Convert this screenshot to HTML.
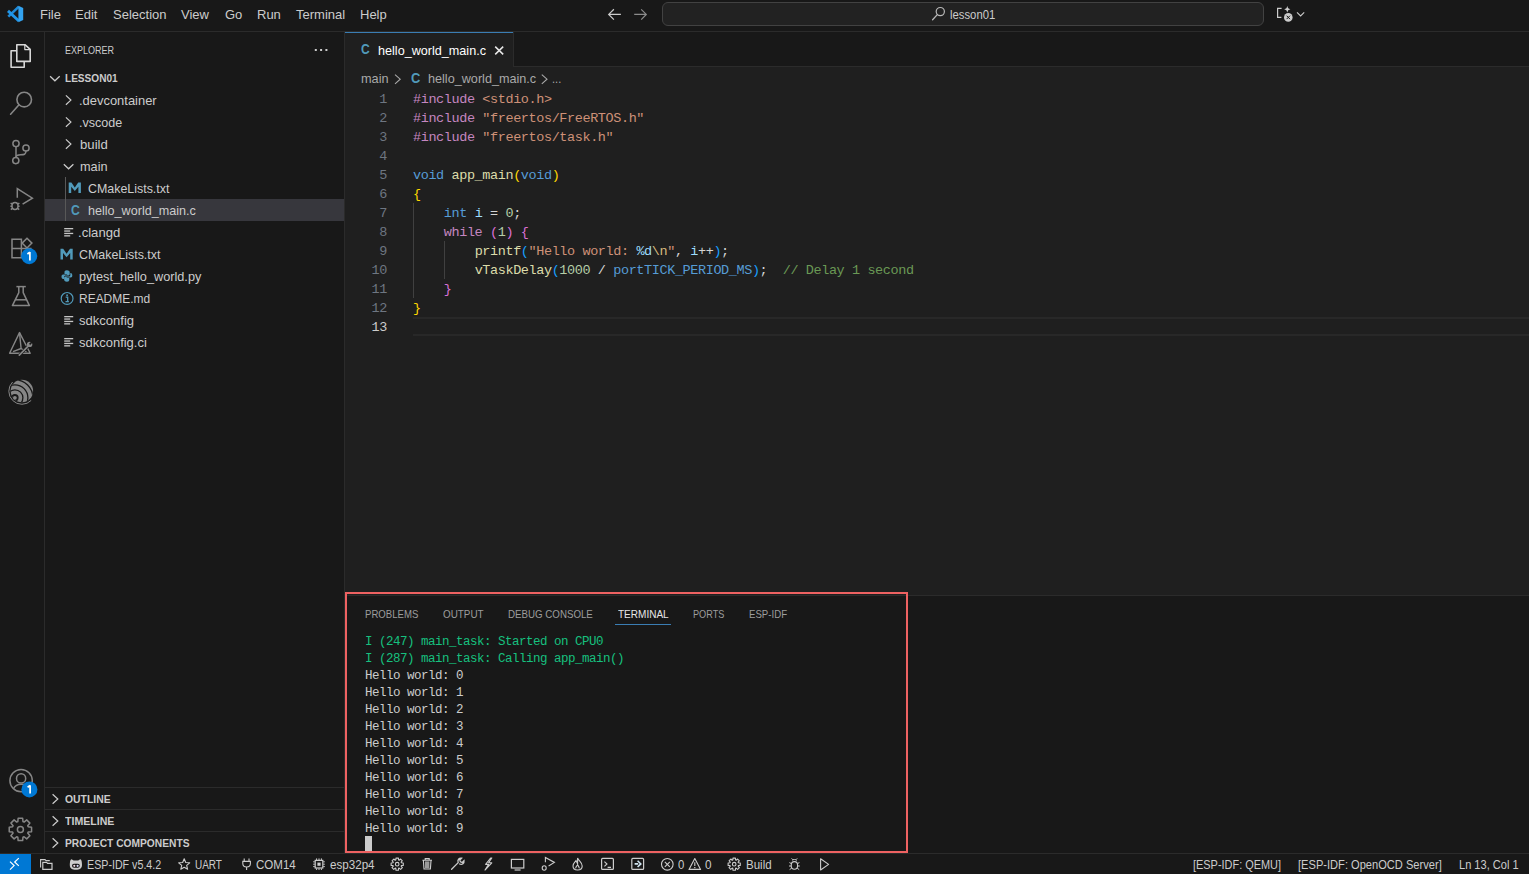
<!DOCTYPE html>
<html><head><meta charset="utf-8"><title>VS Code</title>
<style>
*{margin:0;padding:0;box-sizing:border-box}
html,body{width:1529px;height:874px;overflow:hidden;background:#181818;font-family:"Liberation Sans",sans-serif;color:#cccccc}
.a{position:absolute;white-space:pre;transform-origin:0 0;line-height:normal}
.bx{position:absolute}
svg{position:absolute;overflow:visible}
.menu{font-size:13px;color:#cccccc}
.tr{font-size:13px;color:#cccccc}
.sec{font-size:11px;font-weight:bold;color:#cccccc}
.cl{left:413px;font-family:"Liberation Mono",monospace;font-size:13.5px;letter-spacing:-0.4px;line-height:19px;height:19px;color:#d4d4d4}
.ln{position:absolute;left:345px;width:42px;text-align:right;font-family:"Liberation Mono",monospace;font-size:13.5px;letter-spacing:-0.4px;line-height:19px;color:#6e7681}
.tl{left:365px;font-family:"Liberation Mono",monospace;font-size:12.5px;letter-spacing:-0.5px;line-height:17px;color:#cccccc}
.pt{font-size:11px;color:#9d9d9d}
.sb{font-size:12px;color:#cccccc}
.k{color:#569cd6}.pp{color:#c586c0}.s{color:#ce9178}.f{color:#dcdcaa}.v{color:#9cdcfe}.n{color:#b5cea8}.c{color:#6a9955}.e{color:#d7ba7d}
.b1{color:#ffd700}.b2{color:#da70d6}.b3{color:#179fff}
.g{color:#16c07f}
</style></head><body>
<div class="bx" style="left:0px;top:0px;width:1529px;height:31px;background:#181818;"></div><div class="bx" style="left:0px;top:31px;width:1529px;height:1px;background:#2b2b2b;"></div><div class="bx" style="left:44px;top:32px;width:1px;height:821px;background:#2b2b2b;"></div><div class="bx" style="left:344px;top:32px;width:1px;height:821px;background:#2b2b2b;"></div><div class="bx" style="left:345px;top:32px;width:1184px;height:563px;background:#1f1f1f;"></div><div class="bx" style="left:345px;top:32px;width:1184px;height:34px;background:#181818;"></div><div class="bx" style="left:345px;top:66px;width:1184px;height:1px;background:#2b2b2b;"></div><div class="bx" style="left:345px;top:32px;width:168px;height:35px;background:#1f1f1f;"></div><div class="bx" style="left:345px;top:32px;width:168px;height:1px;background:#3a7db3;"></div><div class="bx" style="left:513px;top:32px;width:1px;height:34px;background:#2b2b2b;"></div><div class="bx" style="left:345px;top:595px;width:1184px;height:1px;background:#2b2b2b;"></div><div class="bx" style="left:0px;top:853px;width:1529px;height:1px;background:#2b2b2b;"></div><div class="bx" style="left:0px;top:854px;width:31px;height:20px;background:#0078d4;"></div><div class="bx" style="left:662px;top:2px;width:602px;height:24px;background:#222222;border:1px solid #424242;border-radius:6px"></div><div class="bx" style="left:45px;top:199px;width:299px;height:22px;background:#37373d;"></div><div class="bx" style="left:45px;top:787px;width:299px;height:1px;background:#2b2b2b;"></div><div class="bx" style="left:45px;top:809px;width:299px;height:1px;background:#2b2b2b;"></div><div class="bx" style="left:45px;top:831px;width:299px;height:1px;background:#2b2b2b;"></div><div class="bx" style="left:413px;top:317px;width:1116px;height:2px;background:#282828;"></div><div class="bx" style="left:413px;top:334px;width:1116px;height:2px;background:#282828;"></div><div class="bx" style="left:413px;top:203px;width:1px;height:95px;background:#404040;"></div><div class="bx" style="left:444px;top:241px;width:1px;height:38px;background:#404040;"></div><div class="bx" style="left:65px;top:177px;width:1px;height:44px;background:#585858;"></div><div class="bx" style="left:615px;top:624px;width:56px;height:1px;background:#3a7db3;"></div><div class="bx" style="left:365px;top:836px;width:7px;height:15px;background:#cccccc;"></div>
<svg style="left:0px;top:0px" width="32" height="31" viewBox="0 0 32 31">
<g fill="none" stroke-linecap="butt">
<path d="M18.8 6.6 L8.3 16.6" stroke="#1f8ad8" stroke-width="2.6"/>
<path d="M8.0 10.9 L18.9 21.0" stroke="#2196e8" stroke-width="2.9"/>
</g>
<polygon points="18.4,5.8 23.2,8.1 23.2,19.9 18.4,22.2" fill="#33a3f0"/>
</svg>
<svg style="left:0px;top:32px" width="45" height="45" viewBox="0 0 45 45">
<g fill="none" stroke="#d7d7d7" stroke-width="1.6" stroke-linejoin="round">
<path d="M16.8 12.8 H25.2 L30.2 17.4 V29.4 H16.8 Z"/>
<path d="M24.8 12.8 V17.6 H30.2" stroke-width="1.2"/>
<path d="M16.6 18.8 H11.1 V35.2 H24.2 V29.6"/>
</g></svg><svg style="left:0px;top:77px" width="45" height="48" viewBox="0 0 45 48">
<g fill="none" stroke="#868686" stroke-width="1.6">
<circle cx="24.2" cy="22.6" r="7.3"/>
<path d="M19.0 27.8 L10.6 37.2" stroke-linecap="round"/>
</g></svg><svg style="left:0px;top:125px" width="45" height="48" viewBox="0 0 45 48">
<g fill="none" stroke="#868686" stroke-width="1.5">
<circle cx="16" cy="18.6" r="3.1"/>
<circle cx="26" cy="23.0" r="3.1"/>
<circle cx="15.8" cy="35.6" r="3.1"/>
<path d="M16 21.7 V32.5"/>
<path d="M26 26.1 C26 29.5 24 29.8 20.5 29.8 C18 29.8 16.2 30.5 16 32.4"/>
</g></svg><svg style="left:0px;top:173px" width="45" height="48" viewBox="0 0 45 48">
<g fill="none" stroke="#868686" stroke-width="1.5" stroke-linejoin="miter">
<path d="M17.3 24.8 V15.6 L32.4 25.2 L22.6 31.2"/>
<ellipse cx="15.0" cy="33.0" rx="3.0" ry="3.5"/>
<path d="M10.6 30.0 L12.2 31.2 M10.4 33.2 H12 M10.8 36.6 L12.4 35.2 M19.4 30.0 L17.8 31.2 M19.6 33.2 H18 M19.2 36.6 L17.6 35.2"/>
</g></svg><svg style="left:0px;top:221px" width="45" height="48" viewBox="0 0 45 48">
<g fill="none" stroke="#868686" stroke-width="1.5">
<path d="M12 18.2 H21.4 V36.8 H12 Z M12 27.6 H30.8 V36.8 H21.4"/>
<path d="M27.0 17.2 L31.9 22.1 L27.0 27.0 L22.1 22.1 Z"/>
</g>
<circle cx="29.2" cy="35.2" r="8" fill="#0078d4"/>
<path d="M29.9 31.0 V39.4 M29.9 31.2 L27.4 33.0" fill="none" stroke="#ffffff" stroke-width="1.7"/></svg><svg style="left:0px;top:269px" width="45" height="48" viewBox="0 0 45 48">
<g fill="none" stroke="#868686" stroke-width="1.5" stroke-linejoin="round">
<path d="M16.4 17.6 H25.8"/>
<path d="M18.8 17.6 V23.6 L12.4 36.6 H29.4 L23.2 23.6 V17.6"/>
<path d="M15.2 30.8 H26.6"/>
</g></svg><svg style="left:0px;top:317px" width="45" height="48" viewBox="0 0 45 48">
<g fill="none" stroke="#868686" stroke-width="1.4" stroke-linejoin="round">
<path d="M19.5 15.6 L9.6 36.2 H30.2 Z"/>
<path d="M19.5 15.6 L21.1 31.5 L13 34.6 M21.1 31.5 L26.5 35"/>
</g>
<path d="M19.3 38.2 L28.4 28.8" stroke="#181818" stroke-width="3"/>
<path d="M19.3 38.2 L28.4 28.8" stroke="#868686" stroke-width="1.7" stroke-linecap="round"/>
<circle cx="29.6" cy="27.4" r="2.7" fill="#868686"/>
<path d="M29.6 27.4 L32.6 24.4" stroke="#181818" stroke-width="1.5"/>
</svg><svg style="left:0px;top:365px" width="45" height="48" viewBox="0 0 45 48">
<defs><clipPath id="espc"><circle cx="21.9" cy="26.0" r="11.2"/></clipPath></defs>
<g clip-path="url(#espc)">
<rect x="0" y="0" width="45" height="48" fill="#868686"/>
<g fill="none" stroke="#181818" stroke-width="1.3">
<circle cx="14.9" cy="32.8" r="8"/>
<circle cx="14.9" cy="32.8" r="13"/>
<circle cx="14.9" cy="32.8" r="18"/>
</g>
<circle cx="14.9" cy="32.8" r="3.7" fill="#181818"/>
<path d="M14.9 32.8 L30 48 L0 48 L0 30 Z" fill="#181818" opacity="0"/>
</g>
<circle cx="14.9" cy="32.8" r="1.9" fill="#868686"/>
<path d="M12.6 17.0 A12.3 12.3 0 0 0 31.2 35.4" fill="none" stroke="#868686" stroke-width="1"/>
</svg><svg style="left:0px;top:757px" width="45" height="48" viewBox="0 0 45 48">
<g fill="none" stroke="#868686" stroke-width="1.5">
<circle cx="21.1" cy="23.6" r="11.2"/>
<circle cx="21.1" cy="21.4" r="4.6"/>
<path d="M13.4 31.8 C15 28.6 17.8 27.2 21.1 27.2 C24.4 27.2 27.2 28.6 28.8 31.8"/>
</g>
<circle cx="29.4" cy="32.4" r="8" fill="#0078d4"/>
<path d="M30.1 28.2 V36.6 M30.1 28.4 L27.6 30.2" fill="none" stroke="#ffffff" stroke-width="1.7"/></svg><svg style="left:7.20px;top:815.60px" width="26.80" height="26.80" viewBox="7.20 815.60 26.80 26.80"><polygon points="31.77,826.74 31.77,831.26 28.38,831.58 27.93,832.68 30.10,835.30 26.90,838.50 24.28,836.33 23.18,836.78 22.86,840.17 18.34,840.17 18.02,836.78 16.92,836.33 14.30,838.50 11.10,835.30 13.27,832.68 12.82,831.58 9.43,831.26 9.43,826.74 12.82,826.42 13.27,825.32 11.10,822.70 14.30,819.50 16.92,821.67 18.02,821.22 18.34,817.83 22.86,817.83 23.18,821.22 24.28,821.67 26.90,819.50 30.10,822.70 27.93,825.32 28.38,826.42" fill="none" stroke="#868686" stroke-width="1.5" stroke-linejoin="round"/><circle cx="20.6" cy="829" r="3.0" fill="none" stroke="#868686" stroke-width="1.5"/></svg>
<svg style="left:0;top:0" width="1529" height="874" viewBox="0 0 1529 874"><path d="M50.1 76.2 L54.90 80.80 L59.70 76.2" fill="none" stroke="#cccccc" stroke-width="1.2"/><path d="M65.9 95.4 L70.90 100.10 L65.9 104.80" fill="none" stroke="#cccccc" stroke-width="1.2"/><path d="M65.9 117.4 L70.90 122.10 L65.9 126.80" fill="none" stroke="#cccccc" stroke-width="1.2"/><path d="M65.9 139.4 L70.90 144.10 L65.9 148.80" fill="none" stroke="#cccccc" stroke-width="1.2"/><path d="M63.8 164.2 L68.60 168.80 L73.40 164.2" fill="none" stroke="#cccccc" stroke-width="1.2"/><polygon points="68.70,193.00 68.70,182.40 71.40,182.40 74.80,187.38 78.20,182.40 80.90,182.40 80.90,193.00 78.40,193.00 78.40,186.64 74.80,190.88 71.20,186.64 71.20,193.00" fill="#519aba"/><rect x="64.2" y="228.00" width="9.0" height="1.3" fill="#c5c5c5"/><rect x="64.2" y="230.40" width="6.0" height="1.3" fill="#c5c5c5"/><rect x="64.2" y="232.80" width="9.0" height="1.3" fill="#c5c5c5"/><rect x="64.2" y="235.20" width="6.0" height="1.3" fill="#c5c5c5"/><polygon points="60.50,259.40 60.50,248.80 63.20,248.80 66.60,253.78 70.00,248.80 72.70,248.80 72.70,259.40 70.20,259.40 70.20,253.04 66.60,257.28 63.00,253.04 63.00,259.40" fill="#519aba"/><g fill="#519aba">
<path d="M66.9 270.3 C64.7 270.3 64.5 271.3 64.5 272.5 V273.90000000000003 H67.1 V274.5 H63.1 C61.9 274.5 61.5 275.5 61.5 276.5 C61.5 277.90000000000003 62.0 278.90000000000003 63.1 278.90000000000003 H64.1 V277.1 C64.1 276.1 64.9 275.5 65.9 275.5 H68.5 C69.3 275.5 69.7 274.90000000000003 69.7 274.1 V272.5 C69.7 271.3 68.9 270.3 66.9 270.3 Z"/>
<path d="M66.9 281.7 C69.1 281.7 69.3 280.7 69.3 279.5 V278.1 H66.7 V277.5 H70.7 C71.9 277.5 72.3 276.5 72.3 275.5 C72.3 274.1 71.8 273.1 70.7 273.1 H70.3 V274.90000000000003 C70.3 275.90000000000003 69.5 276.5 68.5 276.5 H65.7 C64.7 276.5 64.1 277.1 64.1 277.90000000000003 V279.5 C64.1 280.7 64.9 281.7 66.9 281.7 Z"/>
</g><circle cx="67.1" cy="298.4" r="5.9" fill="none" stroke="#519aba" stroke-width="1.2"/>
<circle cx="67.1" cy="295.20" r="0.9" fill="#519aba"/>
<path d="M65.70 297.20 H67.70 V301.40 M65.50 301.60 H68.90" fill="none" stroke="#519aba" stroke-width="1.3"/><rect x="64.2" y="316.00" width="9.0" height="1.3" fill="#c5c5c5"/><rect x="64.2" y="318.40" width="6.0" height="1.3" fill="#c5c5c5"/><rect x="64.2" y="320.80" width="9.0" height="1.3" fill="#c5c5c5"/><rect x="64.2" y="323.20" width="6.0" height="1.3" fill="#c5c5c5"/><rect x="64.2" y="338.00" width="9.0" height="1.3" fill="#c5c5c5"/><rect x="64.2" y="340.40" width="6.0" height="1.3" fill="#c5c5c5"/><rect x="64.2" y="342.80" width="9.0" height="1.3" fill="#c5c5c5"/><rect x="64.2" y="345.20" width="6.0" height="1.3" fill="#c5c5c5"/><path d="M52.6 794.2 L57.80 799.00 L52.6 803.80" fill="none" stroke="#cccccc" stroke-width="1.2"/><path d="M52.6 816.2 L57.80 821.00 L52.6 825.80" fill="none" stroke="#cccccc" stroke-width="1.2"/><path d="M52.6 838.2 L57.80 843.00 L52.6 847.80" fill="none" stroke="#cccccc" stroke-width="1.2"/><rect x="314.8" y="49" width="2" height="2" fill="#cccccc"/><rect x="320.1" y="49" width="2" height="2" fill="#cccccc"/><rect x="325.4" y="49" width="2" height="2" fill="#cccccc"/><path d="M613.9 9.3 L608.7 14.4 L613.9 19.6 M608.7 14.4 H620.9" fill="none" stroke="#cccccc" stroke-width="1.2"/><path d="M641.2 9.3 L646.3 14.4 L641.2 19.6 M646.3 14.4 H634.2" fill="none" stroke="#8b8b8b" stroke-width="1.2"/><circle cx="940.3" cy="11.6" r="4.1" fill="none" stroke="#b8b8b8" stroke-width="1.2"/><path d="M937.3 14.6 L932.6 19.8" stroke="#b8b8b8" stroke-width="1.3" stroke-linecap="round"/><path d="M1281.6 8.4 H1277.6 V17.4 H1281.4" fill="none" stroke="#cccccc" stroke-width="1.2"/><path d="M1287.3 5.8 Q1287.6 8.8 1290.4 9.3 Q1287.6 9.8 1287.3 12.6 Q1287 9.8 1284.2 9.3 Q1287 8.8 1287.3 5.8 Z" fill="#cccccc"/><circle cx="1288.3" cy="17.4" r="4.3" fill="#cccccc"/><path d="M1286.6 15.7 L1290 19.1 M1290 15.7 L1286.6 19.1" stroke="#181818" stroke-width="1"/><path d="M1297.0 12.4 L1300.60 15.90 L1304.20 12.4" fill="none" stroke="#cccccc" stroke-width="1.1"/><path d="M495.2 46.6 L503.2 54.4 M503.2 46.6 L495.2 54.4" stroke="#e8e8e8" stroke-width="1.5"/><path d="M395.0 74.6 L400.20 79.20 L395.0 83.80" fill="none" stroke="#a9a9a9" stroke-width="1.1"/><path d="M541.8 74.6 L547.00 79.20 L541.8 83.80" fill="none" stroke="#a9a9a9" stroke-width="1.1"/><path d="M10 861.6 L14.1 865.6 L10 869.6 M18.8 858.1 L14.7 862 L18.8 865.9" fill="none" stroke="#ffffff" stroke-width="1.2"/><path d="M40.6 867.6 V859.6 H45 L46 860.6 H49.8" fill="none" stroke="#cccccc" stroke-width="1.1"/><path d="M42.8 869.4 V862.4 H46.6 L47.6 863.4 H52 V869.4 Z" fill="none" stroke="#cccccc" stroke-width="1.2"/><path d="M69.8 865 C69.8 862 70.2 859.4 71.6 859.2 L73.6 860.6 H78.2 L80.2 859.2 C81.6 859.4 82.0 862 82.0 865 C82.0 868.4 79.4 869.8 75.9 869.8 C72.4 869.8 69.8 868.4 69.8 865 Z" fill="#cccccc"/><rect x="72.0" y="863.8" width="7.8" height="4.0" rx="2" fill="#141414"/><circle cx="74.3" cy="865.8" r="1.1" fill="#f0d8e0"/><circle cx="77.6" cy="865.8" r="1.1" fill="#d8d8f8"/><polygon points="184.20,858.80 185.73,862.50 189.72,862.81 186.67,865.40 187.61,869.29 184.20,867.20 180.79,869.29 181.73,865.40 178.68,862.81 182.67,862.50" fill="none" stroke="#cccccc" stroke-width="1.1" stroke-linejoin="round"/><path d="M244.2 858.4 V861 M249 858.4 V861 M242.8 861.4 H250.4 V863.6 C250.4 865.8 248.6 867 246.6 867 C244.6 867 242.8 865.8 242.8 863.6 Z M246.6 867 V870" fill="none" stroke="#cccccc" stroke-width="1.1"/><rect x="315.2" y="860.4" width="7.6" height="7.6" fill="none" stroke="#cccccc" stroke-width="1.2"/><rect x="317.4" y="862.6" width="3.2" height="3.2" fill="#cccccc"/><path d="M316.6 858.4 V860 M319 858.4 V860 M321.4 858.4 V860 M316.6 868.4 V870 M319 868.4 V870 M321.4 868.4 V870 M313.2 861.8 H314.8 M313.2 864.2 H314.8 M313.2 866.6 H314.8 M323.2 861.8 H324.8 M323.2 864.2 H324.8 M323.2 866.6 H324.8" stroke="#cccccc" stroke-width="1"/><path d="M422.4 860.2 H432 M425.2 860.2 V858.6 H429.2 V860.2 M423.4 860.6 L424 869 H430.4 L431 860.6" fill="none" stroke="#cccccc" stroke-width="1.1"/><rect x="425" y="861.4" width="4.4" height="7" fill="#9a9a9a"/><path d="M451.6 869.2 L458.2 862.6 M458.2 862.6 C457.2 860 459 857.8 461.6 858.2 L459.8 860 L460.4 861.8 L462.2 862.4 L464 860.6 C464.4 863.2 462.2 865 459.6 864" fill="none" stroke="#cccccc" stroke-width="1.3" stroke-linecap="round"/><path d="M490.6 858 L485.6 864.4 H488.6 L485 870 L491.8 862.8 H488.6 L491.8 858 Z" fill="none" stroke="#cccccc" stroke-width="1.1" stroke-linejoin="round"/><rect x="511.4" y="859.4" width="12.4" height="8.6" fill="none" stroke="#cccccc" stroke-width="1.2"/><path d="M514.6 870 H520.6" stroke="#cccccc" stroke-width="1.2"/><path d="M545.4 862.2 V857.4 L554.4 862.4 L548.6 866" fill="none" stroke="#cccccc" stroke-width="1.1"/><ellipse cx="544.2" cy="868" rx="2" ry="2.2" fill="none" stroke="#cccccc" stroke-width="1.1"/><path d="M577.6 858 C578.4 860.6 582.2 862.4 582.2 866 C582.2 868.6 580 870 577.6 870 C575.2 870 573 868.6 573 866 C573 863.4 575 862 576 860.6 C576.8 862.2 577 863 577.6 863.8 Z M575.8 868.4 C575.4 866.8 577 866 577.6 864.8 C578.2 866 579.4 866.8 579.2 868.4" fill="none" stroke="#cccccc" stroke-width="1.1"/><rect x="601.6" y="858.4" width="11.8" height="11" rx="1" fill="none" stroke="#cccccc" stroke-width="1.2"/><path d="M604.4 861.6 L607 864 L604.4 866.4 M607.6 867.4 H611" fill="none" stroke="#cccccc" stroke-width="1.1"/><rect x="631.8" y="858.4" width="11.8" height="11" rx="1" fill="none" stroke="#cccccc" stroke-width="1.2"/><path d="M634.6 863.9 H638.2 M637.6 860.8 L640.8 863.9 L637.6 867" fill="none" stroke="#d0e4f0" stroke-width="1.6"/><circle cx="667.3" cy="864.3" r="5.8" fill="none" stroke="#cccccc" stroke-width="1.1"/><path d="M664.8 861.8 L669.8 866.8 M669.8 861.8 L664.8 866.8" stroke="#cccccc" stroke-width="1.1"/><path d="M694.8 858.6 L700.6 869.4 H689 Z" fill="none" stroke="#cccccc" stroke-width="1.1" stroke-linejoin="round"/><path d="M694.8 862.2 V866" stroke="#cccccc" stroke-width="1.1"/><rect x="694.2" y="867" width="1.2" height="1.2" fill="#cccccc"/><ellipse cx="794.4" cy="865.4" rx="3.2" ry="3.8" fill="none" stroke="#cccccc" stroke-width="1.1"/><path d="M792 860.4 C792.4 859.2 796.4 859.2 796.8 860.4 M789.4 862.6 L791.4 863.6 M799.4 862.6 L797.4 863.6 M789 866 H791.2 M799.8 866 H797.6 M789.6 869.6 L791.6 868.2 M799.2 869.6 L797.2 868.2 M791.6 858.4 L792.6 859.6 M797.2 858.4 L796.2 859.6" fill="none" stroke="#cccccc" stroke-width="1"/><path d="M820.6 858.8 L828.6 864.4 L820.6 870 Z" fill="none" stroke="#cccccc" stroke-width="1.1" stroke-linejoin="round"/></svg>
<svg style="left:389.20px;top:855.70px" width="16.40" height="16.40" viewBox="389.20 855.70 16.40 16.40"><polygon points="403.48,862.67 403.48,865.13 401.58,865.28 401.33,865.87 402.57,867.33 400.83,869.07 399.37,867.83 398.78,868.08 398.63,869.98 396.17,869.98 396.02,868.08 395.43,867.83 393.97,869.07 392.23,867.33 393.47,865.87 393.22,865.28 391.32,865.13 391.32,862.67 393.22,862.52 393.47,861.93 392.23,860.47 393.97,858.73 395.43,859.97 396.02,859.72 396.17,857.82 398.63,857.82 398.78,859.72 399.37,859.97 400.83,858.73 402.57,860.47 401.33,861.93 401.58,862.52" fill="none" stroke="#cccccc" stroke-width="1.1" stroke-linejoin="round"/><circle cx="397.4" cy="863.9" r="1.8" fill="none" stroke="#cccccc" stroke-width="1.1"/></svg>
<svg style="left:726.30px;top:856.10px" width="16.40" height="16.40" viewBox="726.30 856.10 16.40 16.40"><polygon points="740.58,863.07 740.58,865.53 738.68,865.68 738.43,866.27 739.67,867.73 737.93,869.47 736.47,868.23 735.88,868.48 735.73,870.38 733.27,870.38 733.12,868.48 732.53,868.23 731.07,869.47 729.33,867.73 730.57,866.27 730.32,865.68 728.42,865.53 728.42,863.07 730.32,862.92 730.57,862.33 729.33,860.87 731.07,859.13 732.53,860.37 733.12,860.12 733.27,858.22 735.73,858.22 735.88,860.12 736.47,860.37 737.93,859.13 739.67,860.87 738.43,862.33 738.68,862.92" fill="none" stroke="#cccccc" stroke-width="1.1" stroke-linejoin="round"/><circle cx="734.5" cy="864.3" r="1.8" fill="none" stroke="#cccccc" stroke-width="1.1"/></svg>
<span id="m_file" class="a menu" style="left:40.00px;top:7px;">File</span><span id="m_edit" class="a menu" style="left:75.00px;top:7px;">Edit</span><span id="m_sel" class="a menu" style="left:113.00px;top:7px;">Selection</span><span id="m_view" class="a menu" style="left:181.00px;top:7px;">View</span><span id="m_go" class="a menu" style="left:225.00px;top:7px;">Go</span><span id="m_run" class="a menu" style="left:257.00px;top:7px;">Run</span><span id="m_term" class="a menu" style="left:296.00px;top:7px;">Terminal</span><span id="m_help" class="a menu" style="left:360.00px;top:7px;">Help</span><span id="cc" class="a " style="left:950.41px;top:8px;transform:scaleX(0.9418);font-size:12px;color:#cccccc">lesson01</span><span id="explorer" class="a " style="left:64.90px;top:44px;transform:scaleX(0.8200);font-size:11px;color:#cccccc">EXPLORER</span><span id="lesson" class="a sec" style="left:64.89px;top:72px;transform:scaleX(0.9157);">LESSON01</span><span id="t_dev" class="a tr" style="left:78.61px;top:93px;transform:scaleX(0.9949);">.devcontainer</span><span id="t_vsc" class="a tr" style="left:78.63px;top:115px;transform:scaleX(0.9660);">.vscode</span><span id="t_build" class="a tr" style="left:79.50px;top:137px;transform:scaleX(1.0120);">build</span><span id="t_main" class="a tr" style="left:79.50px;top:159px;transform:scaleX(0.9788);">main</span><span id="t_cm1" class="a tr" style="left:87.60px;top:181px;transform:scaleX(0.9547);">CMakeLists.txt</span><span id="t_hw" class="a tr" style="left:87.50px;top:203px;transform:scaleX(0.9685);">hello_world_main.c</span><span id="t_clangd" class="a tr" style="left:77.70px;top:225px;transform:scaleX(1.0073);">.clangd</span><span id="t_cm2" class="a tr" style="left:78.70px;top:247px;transform:scaleX(0.9547);">CMakeLists.txt</span><span id="t_py" class="a tr" style="left:78.70px;top:269px;transform:scaleX(0.9785);">pytest_hello_world.py</span><span id="t_readme" class="a tr" style="left:78.70px;top:291px;transform:scaleX(0.9209);">README.md</span><span id="t_sdk" class="a tr" style="left:78.70px;top:313px;transform:scaleX(1.0037);">sdkconfig</span><span id="t_sdkci" class="a tr" style="left:78.70px;top:335px;transform:scaleX(0.9986);">sdkconfig.ci</span><span id="s_outline" class="a sec" style="left:64.70px;top:793px;transform:scaleX(0.9448);">OUTLINE</span><span id="s_timeline" class="a sec" style="left:64.90px;top:815px;transform:scaleX(0.9629);">TIMELINE</span><span id="s_proj" class="a sec" style="left:64.90px;top:837px;transform:scaleX(0.9299);">PROJECT COMPONENTS</span><span id="ic_tab" class="a " style="left:360.50px;top:41px;transform:scaleX(0.8600);font-size:14px;font-weight:bold;color:#519aba">C</span><span id="ic_tree" class="a " style="left:70.60px;top:202px;transform:scaleX(0.8700);font-size:14px;font-weight:bold;color:#519aba">C</span><span id="ic_bc" class="a " style="left:410.80px;top:70px;transform:scaleX(0.9200);font-size:14px;font-weight:bold;color:#519aba">C</span><span id="tab" class="a " style="left:377.50px;top:43px;transform:scaleX(0.9703);font-size:13px;color:#ffffff">hello_world_main.c</span><span id="bc_main" class="a " style="left:361.20px;top:71px;transform:scaleX(0.9788);font-size:13px;color:#a9a9a9">main</span><span id="bc_file" class="a " style="left:428.10px;top:71px;transform:scaleX(0.9721);font-size:13px;color:#a9a9a9">hello_world_main.c</span><span id="bc_dots" class="a " style="left:552.21px;top:71px;transform:scaleX(0.8509);font-size:13px;color:#a9a9a9">...</span><span id="p_prob" class="a pt" style="left:364.90px;top:608px;transform:scaleX(0.8722);">PROBLEMS</span><span id="p_out" class="a pt" style="left:442.80px;top:608px;transform:scaleX(0.8979);">OUTPUT</span><span id="p_dbg" class="a pt" style="left:508.00px;top:608px;transform:scaleX(0.8843);">DEBUG CONSOLE</span><span id="p_term" class="a pt" style="left:618.10px;top:608px;transform:scaleX(0.9107);color:#e7e7e7">TERMINAL</span><span id="p_ports" class="a pt" style="left:693.30px;top:608px;transform:scaleX(0.8317);">PORTS</span><span id="p_esp" class="a pt" style="left:748.50px;top:608px;transform:scaleX(0.8768);">ESP-IDF</span><span id="sb_idf" class="a sb" style="left:86.80px;top:858px;transform:scaleX(0.8904);">ESP-IDF v5.4.2</span><span id="sb_uart" class="a sb" style="left:194.90px;top:858px;transform:scaleX(0.8304);">UART</span><span id="sb_com" class="a sb" style="left:256.49px;top:858px;transform:scaleX(0.9622);">COM14</span><span id="sb_chip" class="a sb" style="left:329.90px;top:858px;transform:scaleX(0.9676);">esp32p4</span><span id="sb_e0" class="a sb" style="left:678.00px;top:858px;transform:scaleX(0.9457);">0</span><span id="sb_w0" class="a sb" style="left:705.05px;top:858px;transform:scaleX(0.9779);">0</span><span id="sb_build" class="a sb" style="left:746.10px;top:858px;transform:scaleX(0.9596);">Build</span><span id="sb_qemu" class="a sb" style="left:1192.80px;top:858px;transform:scaleX(0.9104);">[ESP-IDF: QEMU]</span><span id="sb_ocd" class="a sb" style="left:1297.80px;top:858px;transform:scaleX(0.9251);">[ESP-IDF: OpenOCD Server]</span><span id="sb_ln" class="a sb" style="left:1458.50px;top:858px;transform:scaleX(0.9216);">Ln 13, Col 1</span>
<div class="ln" style="top:90px">1</div><div class="ln" style="top:109px">2</div><div class="ln" style="top:128px">3</div><div class="ln" style="top:147px">4</div><div class="ln" style="top:166px">5</div><div class="ln" style="top:185px">6</div><div class="ln" style="top:204px">7</div><div class="ln" style="top:223px">8</div><div class="ln" style="top:242px">9</div><div class="ln" style="top:261px">10</div><div class="ln" style="top:280px">11</div><div class="ln" style="top:299px">12</div><div class="ln" style="top:318px;color:#cccccc">13</div><div class="a cl" style="top:90px"><span class="pp">#include</span> <span class="s">&lt;stdio.h&gt;</span></div><div class="a cl" style="top:109px"><span class="pp">#include</span> <span class="s">"freertos/FreeRTOS.h"</span></div><div class="a cl" style="top:128px"><span class="pp">#include</span> <span class="s">"freertos/task.h"</span></div><div class="a cl" style="top:166px"><span class="k">void</span> <span class="f">app_main</span><span class="b1">(</span><span class="k">void</span><span class="b1">)</span></div><div class="a cl" style="top:185px"><span class="b1">{</span></div><div class="a cl" style="top:204px">    <span class="k">int</span> <span class="v">i</span> = <span class="n">0</span>;</div><div class="a cl" style="top:223px">    <span class="pp">while</span> <span class="b2">(</span><span class="n">1</span><span class="b2">)</span> <span class="b2">{</span></div><div class="a cl" style="top:242px">        <span class="f">printf</span><span class="b3">(</span><span class="s">"Hello world: </span><span class="v">%d</span><span class="e">\n</span><span class="s">"</span>, <span class="v">i</span>++<span class="b3">)</span>;</div><div class="a cl" style="top:261px">        <span class="f">vTaskDelay</span><span class="b3">(</span><span class="n">1000</span> / <span class="k">portTICK_PERIOD_MS</span><span class="b3">)</span>;  <span class="c">// Delay 1 second</span></div><div class="a cl" style="top:280px">    <span class="b2">}</span></div><div class="a cl" style="top:299px"><span class="b1">}</span></div><div class="a tl" style="top:634px"><span class="g">I (247) main_task: Started on CPU0</span></div><div class="a tl" style="top:651px"><span class="g">I (287) main_task: Calling app_main()</span></div><div class="a tl" style="top:668px">Hello world: 0</div><div class="a tl" style="top:685px">Hello world: 1</div><div class="a tl" style="top:702px">Hello world: 2</div><div class="a tl" style="top:719px">Hello world: 3</div><div class="a tl" style="top:736px">Hello world: 4</div><div class="a tl" style="top:753px">Hello world: 5</div><div class="a tl" style="top:770px">Hello world: 6</div><div class="a tl" style="top:787px">Hello world: 7</div><div class="a tl" style="top:804px">Hello world: 8</div><div class="a tl" style="top:821px">Hello world: 9</div>
<div class="bx" style="left:345px;top:592px;width:563px;height:261px;border:2px solid #ee6262"></div>
</body></html>
